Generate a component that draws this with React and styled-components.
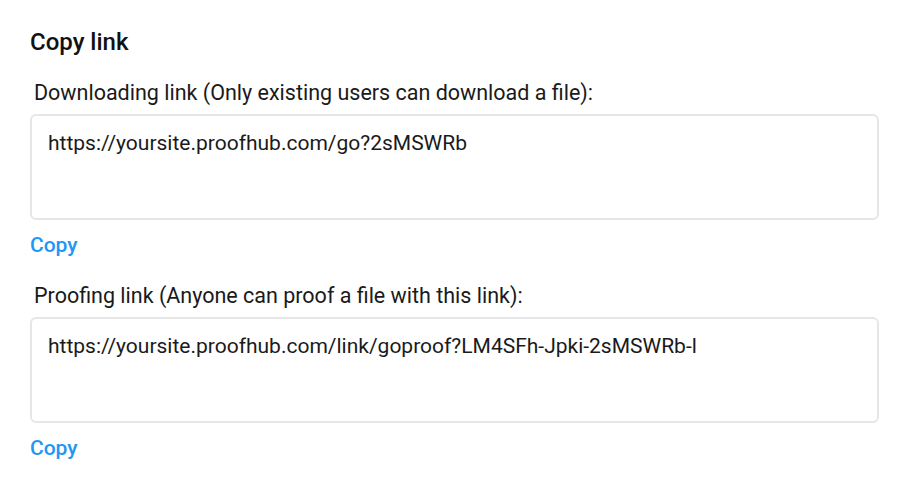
import styled, { createGlobalStyle } from "styled-components";

const GlobalStyle = createGlobalStyle`
  body {
    margin: 0;
    background: #ffffff;
    font-family: Roboto, "Liberation Sans", sans-serif;
  }
`;

const links = [
  {
    label: "Downloading link (Only existing users can download a file):",
    url: "https://yoursite.proofhub.com/go?2sMSWRb",
  },
  {
    label: "Proofing link (Anyone can proof a file with this link):",
    url: "https://yoursite.proofhub.com/link/goproof?LM4SFh-Jpki-2sMSWRb-l",
  },
];

const App = () => {
  return (
    <>
      <GlobalStyle />
      <Wrapper>
        <Title>Copy link</Title>
        {links.map((link) => (
          <Section key={link.url}>
            <Label>{link.label}</Label>
            <LinkBox readOnly value={link.url} />
            <CopyButton>Copy</CopyButton>
          </Section>
        ))}
      </Wrapper>
    </>
  );
};

export default App;

const Wrapper = styled.div`
  padding: 28px 32px 0 30px;
  width: 849px;
`;

const Title = styled.h2`
  margin: 0 0 25px 0;
  font-size: 24px;
  line-height: 28px;
  font-weight: 500;
  color: #111111;
`;

const Section = styled.div`
  display: flex;
  flex-direction: column;
  margin-bottom: 27px;
`;

const Label = styled.label`
  margin: 0 0 9px 4px;
  font-size: 21.5px;
  line-height: 24px;
  color: #1a1a1a;
`;

const LinkBox = styled.textarea`
  box-sizing: border-box;
  width: 849px;
  height: 106px;
  padding: 14px 16px;
  border: 2px solid #e6e6e6;
  border-radius: 6px;
  resize: none;
  outline: none;
  font-family: Roboto, "Liberation Sans", sans-serif;
  font-size: 21px;
  line-height: 26px;
  color: #1a1a1a;
`;

const CopyButton = styled.button`
  align-self: flex-start;
  margin-top: 13px;
  padding: 0;
  border: none;
  background: none;
  cursor: pointer;
  font-family: Roboto, "Liberation Sans", sans-serif;
  font-size: 21px;
  line-height: 24px;
  font-weight: 500;
  color: #2196f3;
`;
